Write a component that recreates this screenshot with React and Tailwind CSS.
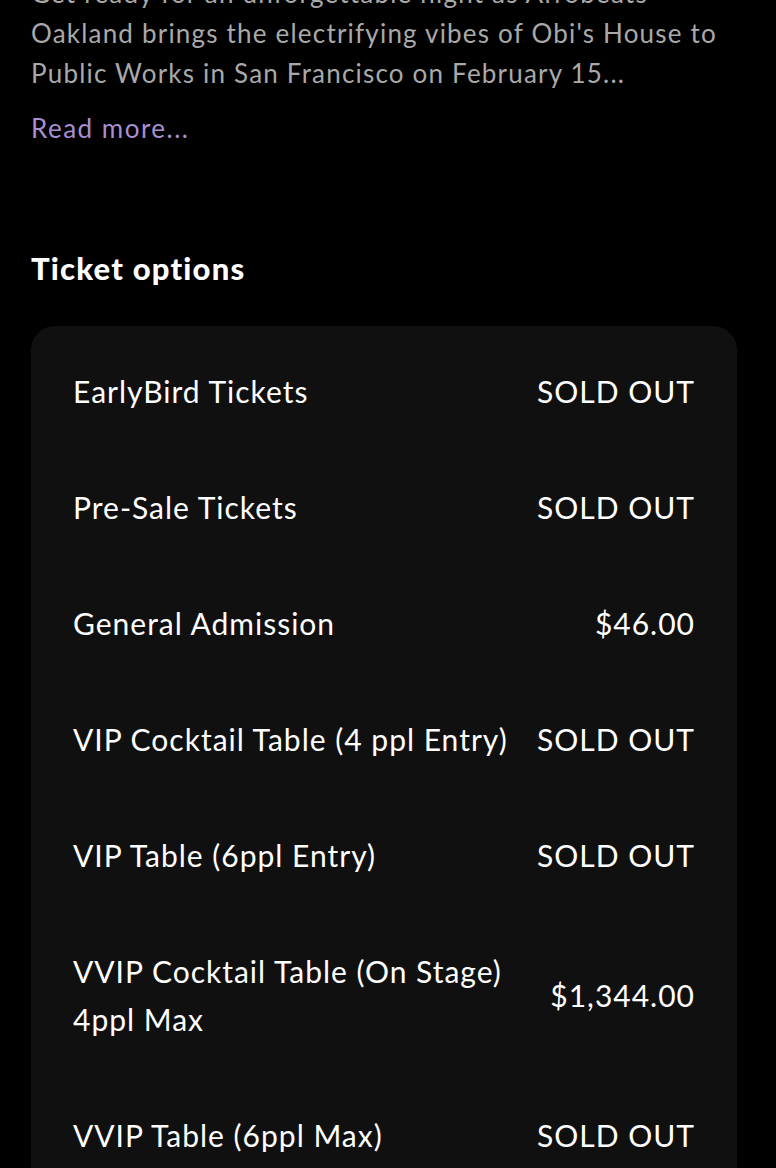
import React from 'react'

const tickets = [
  { id: 'early', name: 'EarlyBird Tickets', price: 'SOLD OUT' },
  { id: 'presale', name: 'Pre-Sale Tickets', price: 'SOLD OUT' },
  { id: 'ga', name: 'General Admission', price: '$46.00' },
  { id: 'vip4', name: 'VIP Cocktail Table (4 ppl Entry)', price: 'SOLD OUT' },
  { id: 'vip6', name: 'VIP Table (6ppl Entry)', price: 'SOLD OUT' },
  { id: 'vvip4', name: 'VVIP Cocktail Table (On Stage) 4ppl Max', price: '$1,344.00' },
  { id: 'vvip6', name: 'VVIP Table (6ppl Max)', price: 'SOLD OUT' },
  { id: 'extra', name: 'VVIP Booth (8ppl Max)', price: 'SOLD OUT' },
]

const TicketRow = ({ name, price }) => (
  <div className="flex items-center justify-between gap-4 py-[34px]">
    <span className="text-[30px] leading-[48px] tracking-[1px] text-white">{name}</span>
    <span className="text-[30px] leading-[48px] tracking-[1px] text-white whitespace-nowrap shrink-0">{price}</span>
  </div>
)

export default function App() {
  return (
    <div className="h-[1168px] bg-black overflow-hidden font-['Lato',_'Noto_Sans',_sans-serif]">
      <div className="px-[31px] mt-[-27px]">
        <p className="text-[26px] leading-[40px] tracking-[1.2px] text-[#a9a9a9]">
          Get ready for an unforgettable night as Afrobeats
          <br />
          Oakland brings the electrifying vibes of Obi's House to
          <br />
          Public Works in San Francisco on February 15...
        </p>
        <div className="mt-[15px] text-[26px] leading-[40px] tracking-[1.5px] text-[#a88fd2]">Read more...</div>

        <h2 className="mt-[100px] text-[31px] leading-[40px] tracking-[1.2px] font-black text-white">Ticket options</h2>

        <div className="mt-[38px] w-[706px] rounded-[24px] bg-[#101010] px-[42px] pt-[7px]">
          {tickets.map((t) => (
            <TicketRow key={t.id} name={t.name} price={t.price} />
          ))}
        </div>
      </div>
    </div>
  )
}
